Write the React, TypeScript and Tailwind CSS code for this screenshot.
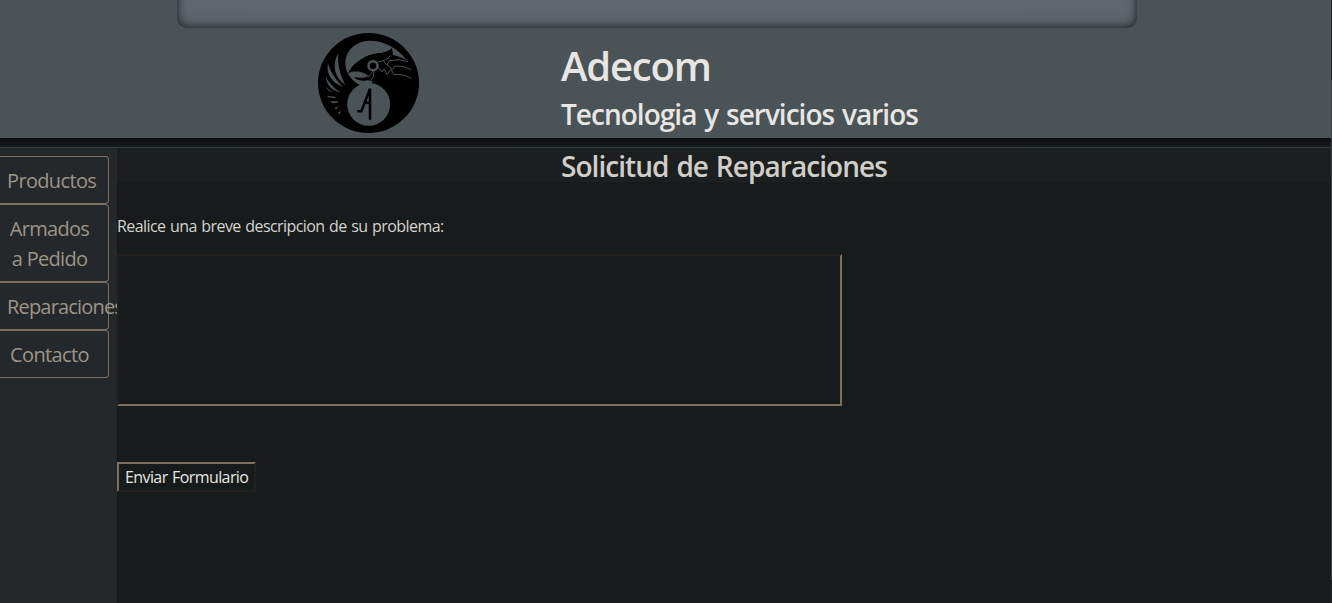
import React from 'react';

const menu = [
  { label: 'Productos', box: 'h-12', text: 'tracking-[-0.65px]' },
  { label: 'Armados a Pedido', box: 'h-[78px]', text: 'tracking-[-0.7px]' },
  { label: 'Reparaciones', box: 'h-12', text: 'tracking-[-0.82px]' },
  { label: 'Contacto', box: 'h-12', text: 'tracking-[-0.6px]' },
];

function Logo() {
  return (
    <svg className="h-[110px] w-[116px] shrink-0" viewBox="0 0 348 330" fill="none">
      <ellipse cx="175.5" cy="165" rx="151.5" ry="150" fill="#000" />
      <path
        d="M148 171 C119 153 105 130 106 103 C108 66 138 39 179 38 C223 38 262 59 292 98 C279 90 264 85 249 81 L246 61 C233 72 222 75 205 76 C183 77 164 89 147 101 C132 111 123 118 115 137 C119 132 128 131 139 132 C154 132 169 138 174 145 C160 151 146 149 132 146 C136 156 151 162 168 159 C178 157 184 161 191 160 L179 168 C168 174 158 174 148 171 Z"
        fill="#4a5355"
      />
      <circle cx="176" cy="229" r="64.5" fill="#4a5355" />
      <path d="M115 137 C122 113 145 98 171 84 C190 75 220 82 246 61 C247 79 231 94 212 99 L214 135 L194 144 L190 159 L172 156 C165 139 145 132 129 132 Z" fill="#000" />
      <path d="M118 134 C134 127 164 131 176 145 C160 150 145 149 132 146 C138 155 154 161 176 157 C184 163 178 169 168 170 C148 174 122 158 118 134Z" fill="#4a5355" />
      <circle cx="189" cy="113" r="13.5" stroke="#4a5355" strokeWidth="7.5" />
      <path
        d="M204 101 Q229 99 243 82 M205 118 L216 132 L222 123 L231 139 L243 124 L252 140 Q278 136 304 151 M220 98 L230 111 L239 98 Q269 91 294 101 M231 111 L247 124 L254 114 Q281 112 304 125 M192 129 Q194 146 181 160 M188 130 Q180 140 174 148"
        stroke="#4a5355"
        strokeWidth="3"
      />
      <path
        d="M85 75 C65 110 72 147 106 171 C90 139 82 112 85 75Z M54 107 C47 138 67 165 99 177 C77 153 63 135 54 107Z M47 145 C49 171 66 188 91 193 C69 178 57 166 47 145Z M47 174 Q58 189 72 193 Q55 193 47 174Z M51 203 L76 207 L76 211 L55 208Z M61 220 L83 220 L83 224 L67 226Z M73 240 L89 235 L78 244Z M84 254 L92 248 L90 259Z"
        fill="#4a5355"
      />
      <path d="M180 275 L180 182 L154 250 L142 250 M165 224 L181 224" stroke="#000" strokeWidth="7.5" strokeLinejoin="bevel" />
    </svg>
  );
}

export default function App() {
  return (
    <div className="flex h-[603px] w-[1332px] overflow-hidden bg-[#171b1b] font-['Open_Sans','Noto_Sans',sans-serif]">
      <div className="flex w-[1331px] flex-col">
        <header className="flex h-[138px] shrink-0 flex-col bg-[#4a5355]">
          <div className="-mt-5 ml-[177px] h-12 w-[960px] shrink-0 rounded-b-[10px] bg-linear-to-b from-[#5f676e] from-60% to-[#566063] shadow-[inset_0_0_10px_#181a1b]" />
          <div className="flex pl-[310px]">
            <Logo />
            <div className="ml-[135px] whitespace-nowrap pt-[14px] font-semibold text-[#e8e6e3]">
              <h1 className="h-12 text-[40px] leading-[48px]"><span className="tracking-[-1.2px]">Adecom</span></h1>
              <h2 className="mt-[7px] h-[34px] text-[28px] leading-[34px]"><span className="tracking-[-0.98px] [word-spacing:1.5px]">Tecnologia y servicios varios</span></h2>
            </div>
          </div>
        </header>
        <div className="h-[9px] shrink-0 bg-linear-to-b from-[#0c0d0e] to-[#181b1d]" />
        <div className="h-px shrink-0 bg-[#3a4141]" />
        <div className="flex min-h-0 flex-1">
          <nav className="w-[117px] shrink-0 overflow-hidden bg-[#24282b] pt-2">
            {menu.map((item) => (
              <a
                key={item.label}
                className={`block w-[109px] rounded-r-[4px] border border-l-0 border-[#7c7060] pl-[7px] pr-[16px] pt-[9px] text-center text-[20px] leading-[30px] text-[#9d9488] ${item.box}`}
              >
                <span className={item.text}>{item.label}</span>
              </a>
            ))}
          </nav>
          <main className="flex-1">
            <h2 className="h-[34px] bg-[#1b1f20] pl-[444px] pt-px text-[28px] font-semibold leading-[34px] text-[#d1cdc7]"><span className="tracking-[-0.95px] [word-spacing:1.5px]">Solicitud de Reparaciones</span></h2>
            <p className="mt-8 h-6 text-[16px] leading-6 text-[#d6d3ce]"><span className="tracking-[-0.58px] [word-spacing:1px]">Realice una breve descripcion de su problema:</span></p>
            <textarea className="mt-4 block h-[152px] w-[725px] resize-none border-2 border-b-[#7c7060] border-l-[#231f1d] border-r-[#7c7060] border-t-[#231f1d] bg-[#171b1b] outline-none" />
            <button className="mt-14 block h-[30px] w-[139px] whitespace-nowrap border-2 border-b-[#231f1d] border-l-[#7c7060] border-r-[#231f1d] border-t-[#7c7060] bg-[#171b1b] pl-[6px] text-left text-[16px] leading-[26px] text-[#e8e6e3]"><span className="tracking-[-0.6px] [word-spacing:1px]">Enviar Formulario</span></button>
          </main>
        </div>
      </div>
      <div className="w-px bg-[#1f2324] pt-20">
        <div className="h-[500px] bg-[#3b4043]" />
      </div>
    </div>
  );
}
